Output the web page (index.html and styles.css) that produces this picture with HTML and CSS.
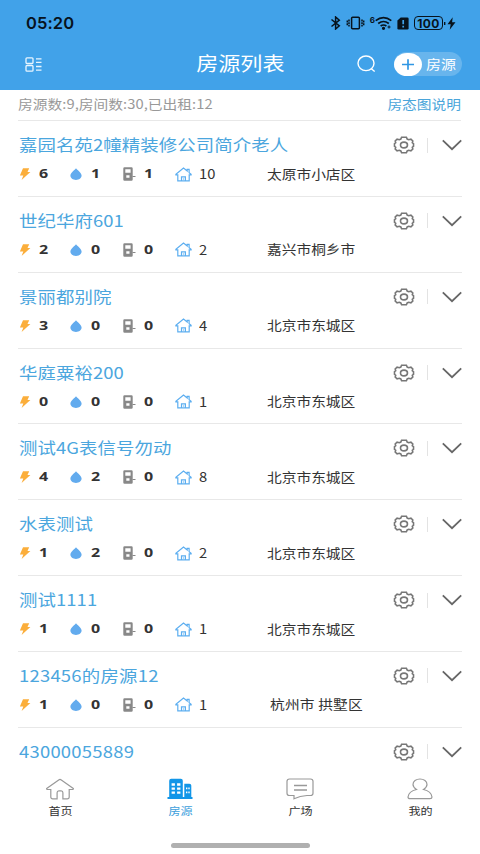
FILE: index.html
```html
<!DOCTYPE html>
<html lang="zh-CN">
<head>
<meta charset="utf-8">
<title>房源列表</title>
<link rel="stylesheet" href="styles.css">
</head>
<body>
<svg class="defs" aria-hidden="true">
  <symbol id="bolt" viewBox="0 0 12 12"><path d="M4 .3h6.200L8.500 3.900h2.900L2.600 11.900l1.700-4.300H.9z"/></symbol>
  <symbol id="drop" viewBox="0 0 12 12"><path d="M6 .2C7.200 2 11.600 4.700 11.600 7.500 11.600 10.200 9 11.900 6 11.900S.4 10.200.4 7.500C.4 4.700 4.800 2 6 .2z"/></symbol>
  <symbol id="meter" viewBox="0 0 13 14"><path fill-rule="evenodd" d="M1.500.2h7q1.200 0 1.200 1.200v11.200q0 1.200-1.200 1.200h-7Q.3 13.800.3 12.600V1.400Q.3.2 1.500.2zM2.300 2.200v3.500h5.300V2.200zM3.300 8.300v2.400h3.200V8.300z"/><path d="M9.500 9h3v1h-3z"/></symbol>
  <symbol id="house" viewBox="0 0 17 15"><path d="M2.800 7.900H.9v-.6L8.500 1l3.700 3V2.300h1.900v3.400l2 1.600v.6h-1.900v6H2.800zM6.500 13.700V9.800h3.900v3.900M8.500 11.400v1"/></symbol>
  <symbol id="gear" viewBox="0 0 22 18"><path d="M8.600 1.200h4.800l.8 1.900 1.400.6 2.300-.5 1.900 1.800-.5 1.800 1.200.9v2.600l-1.200.9.5 1.800-1.900 1.800-2.300-.5-1.400.6-.8 1.900H8.600l-.8-1.900-1.400-.6-2.300.5L2.200 13l.5-1.800-1.200-.9V7.700l1.200-.9L2.200 5l1.900-1.800 2.300.5 1.400-.6z"/><ellipse cx="11" cy="9" rx="3.500" ry="2.900"/></symbol>
  <symbol id="chevron" viewBox="0 0 20 12"><path d="M.8 1.300 10 10.200l9.200-8.900"/></symbol>
</svg>
<header class="header">
  <div class="status">
    <span class="clock">05:20</span>
    <div class="indicators">
      <svg width="10" height="14" viewBox="1 0 10 14" fill="none" stroke="#07131d" stroke-width="1.500"><path d="M1.500 3.500l7.800 6.300L5.600 13V1l3.700 3.200-7.800 6.300"/></svg>
      <svg width="19" height="14" viewBox="0 0 19 14" fill="none" stroke="#07131d" stroke-width="1.500"><rect x="5.600" y="1.200" width="7.800" height="11.600" rx="1"/><path d="M3 3.500v7M16 3.500v7M1.300 4.500v5M17.700 4.500v5" stroke-dasharray="2 .8"/></svg>
      <span class="wifi"><i>6</i><svg width="17" height="14" viewBox="0 0 17 14" fill="none" stroke="#07131d" stroke-width="1.700"><path d="M.7 4.700q7.800-6 15.600 0M3.200 7.500q5.300-4 10.600 0M5.600 10q2.900-2 5.800 0"/><circle cx="8.500" cy="12.300" r=".8" fill="#07131d"/><path d="M14 9.500v3M12.500 11h3" stroke-width="1"/></svg></span>
      <svg width="12" height="13" viewBox="0 0 12 13"><path fill="#07131d" d="M3.700.4h6.600q1.300 0 1.300 1.300v9.600q0 1.300-1.300 1.300H1.700Q.4 12.600.4 11.300V3.600z"/><path stroke="#41a2e9" stroke-width="1.700" d="M6.200 3v4.300M6.200 8.700v1.700"/></svg>
      <span class="battery">100</span>
      <svg class="charge" width="12" height="13" viewBox="-3 0 12 13"><path fill="#07131d" d="M-3 5h1.400v3H-3zM5.700.3.500 7.300h3.200L2.700 12.700 8.500 5.300H5.100z"/></svg>
    </div>
  </div>
  <div class="nav">
    <svg class="menu" width="17" height="15" viewBox="0 0 17 15" fill="none" stroke="#e8f5ff" stroke-width="1.300"><rect x="1" y=".8" width="7" height="5.700" rx="1"/><rect x="1" y="8.500" width="7" height="5.700" rx="1"/><path d="M11 1.800h5.500M11 5.300h5.500M11 9.500h5.500M11 13.200h5.500"/></svg>
    <h1 class="heading"><span class="wide center">房源列表</span></h1>
    <svg class="search" width="19" height="18" viewBox="0 0 19 18" fill="none" stroke="#fff" stroke-width="1.400"><ellipse cx="9" cy="8.300" rx="8" ry="7.300"/><path d="M14 13.500l3.700 3"/></svg>
    <div class="add">
      <svg width="28" height="23" viewBox="0 0 28 23"><rect width="28" height="23" rx="13" ry="11.500" fill="#fff"/><path d="M14 6.200v10.600M8 11.500h12" stroke="#3097e4" stroke-width="1.700"/></svg>
      <span class="wide">房源</span>
    </div>
  </div>
</header>
<div class="summary"><span class="wide">房源数:9,房间数:30,已出租:12</span><a class="wide right">房态图说明</a></div>
<main class="list" id="list"></main>
<nav class="tabs">
  <div class="tab"><svg width="30" height="22" viewBox="0 0 30 22"><path d="M5.800 11.500H2.200Q1 11 2 10.300L13.700 1.900q1.300-.9 2.600 0L28 10.300q1 .7-.2 1.200h-3.600V19q0 1.800-2 1.800h-4.300v-6q0-1.900-1.700-1.900h-2.400q-1.700 0-1.700 1.900v6H7.800q-2 0-2-1.800z"/></svg><span class="wide center">首页</span></div>
  <div class="tab active"><svg width="26" height="22" viewBox="0 0 26 22"><path fill-rule="evenodd" d="M.5 19h1.700V2.700Q2.200.8 4.200.8h9.600q2 0 2 1.900V19h1.500V5.700h5q2 0 2 1.800V19h1.200v2H.5zM4.600 5.300v2.500h3.300V5.300zm5.500 0v2.500h3.300V5.300zM4.600 9.400v2.300h3.300V9.400zm5.500 0v2.300h3.300V9.400zM4.600 13.400v2.300h3.300v-2.300zm5.500 0v2.300h3.300v-2.300zM19 9.400v1.900h1.400V9.400zm2.300 0v1.900h1.400V9.400zM19 13.400v1.900h1.400v-1.900zm2.300 0v1.900h1.400v-1.900z"/></svg><span class="wide center">房源</span></div>
  <div class="tab"><svg width="28" height="22" viewBox="0 0 28 22"><path d="M3.500 1h21q2.500 0 2.500 2.300v12q0 2.200-2.500 2.200H21q-7 .4-13 3.200v-3.200H3.500Q1 17.500 1 15.300v-12Q1 1 3.500 1z"/><path class="lines" d="M8 7.500h13M8 12h13"/></svg><span class="wide center">广场</span></div>
  <div class="tab"><svg width="26" height="22" viewBox="0 0 26 22"><path d="M9.500 11.500C7 9.800 6 8.300 6 6.500 6 3.300 9.100 1 13 1s7 2.300 7 5.500c0 1.800-1 3.300-3.500 5 4.500 1 8 3.700 8.500 7.500q0 1.700-2 1.700H3q-2 0-2-1.700c.5-3.800 4-6.500 8.500-7.500z"/></svg><span class="wide center">我的</span></div>
</nav>
<div class="handle"></div>
<script src="app.js"></script>
</body>
</html>
```
FILE: styles.css
```css
* { box-sizing: border-box; }
body {
  margin: 0;
  width: 480px;
  height: 854px;
  overflow: hidden;
  display: flex;
  flex-direction: column;
  background: #fff;
  color: #333;
  font-family: "Noto Sans CJK SC", sans-serif;
}
svg { display: block; flex: none; }
.defs { position: absolute; width: 0; height: 0; }
.wide {
  display: inline-block;
  white-space: nowrap;
  transform: scaleX(1.15);
  transform-origin: left center;
}
.center { transform-origin: center; }
.right { transform-origin: right center; }

.header { flex: none; height: 90px; background: #41a2e9; }
.status {
  height: 46px;
  padding: 0 24px 0 26px;
  display: flex;
  align-items: center;
  justify-content: space-between;
  color: #07131d;
}
.clock { font: 600 16.500px/20px Inter, sans-serif; letter-spacing: .1px; }
.indicators { display: flex; align-items: center; gap: 5px; }
.wifi { display: flex; }
.wifi i { font: bold 8px/8px Inter, sans-serif; }
.battery {
  width: 29px;
  height: 14px;
  border: 1px solid #07131d;
  border-radius: 4px;
  text-align: center;
  font: bold 12px/13px Inter, sans-serif;
  letter-spacing: .3px;
}
.charge { margin-left: -4px; }
.nav {
  height: 36px;
  padding: 0 18px 0 25px;
  display: grid;
  grid-template-columns: 17px 1fr 19px 68px;
  align-items: center;
}
.heading {
  margin: -2px 0 0 63px;
  text-align: center;
  font-size: 19.200px;
  font-weight: 400;
  line-height: 28px;
  color: #fff;
}
.add {
  margin-left: auto;
  width: 68px;
  height: 24px;
  border-radius: 12px;
  background: #68b5ed;
  display: flex;
  align-items: center;
  gap: 4px;
  color: #fff;
  font-size: 13px;
  line-height: 20px;
}
.nav .search { margin-left: -18px; }

.summary {
  flex: none;
  height: 31px;
  margin: 0 19px 0 18px;
  padding-bottom: 3px;
  border-bottom: 1px solid #e8e8e8;
  display: flex;
  align-items: center;
  justify-content: space-between;
  font-size: 12.800px;
  color: #999;
}
.summary span { letter-spacing: .04px; }
.summary a { color: #4aa5da; }

.list { flex: none; height: 647px; overflow: hidden; padding: 0 18px; }
.row { height: 75.850px; border-bottom: 1px solid #e8e8e8; padding-top: 10px; }
.top { height: 28px; display: flex; align-items: center; }
.name { font-size: 16px; line-height: 28px; color: #4ba6de; margin: -2px 0 0 .5px; letter-spacing: .08px; }
.name.numeric { letter-spacing: .22px; }
.gear { width: 22px; height: 18px; margin-left: auto; fill: none; stroke: #777; stroke-width: 1.600; }
.divider { width: 1px; height: 15px; margin: 0 14px 0 12px; background: #e3e3e3; }
.chevron { width: 20px; height: 12px; fill: none; stroke: #666; stroke-width: 1.800; }
.stats {
  height: 30px;
  display: grid;
  grid-template-columns: 51px 52px 53px 92px 1fr;
  align-items: center;
  margin-left: 1px;
  font-size: 12.800px;
}
.stat { display: flex; align-items: center; line-height: 20px; }
.stat b { font: 700 12.500px/20px "Open Sans", sans-serif; transform: scaleX(1.280); }
.bolt { width: 12px; height: 12px; fill: #fbae3b; margin-right: 8px; }
.drop { width: 12px; height: 12px; fill: #62abee; margin-right: 8.500px; }
.meter { width: 13px; height: 14px; fill: #888; margin: 0 7.500px 0 1px; }
.house { width: 17px; height: 15px; fill: none; stroke: #5caef0; stroke-width: 1.200; margin-right: 6.500px; }
.place { margin-top: -2px; }
.place.shifted { margin-left: 3px; letter-spacing: .15px; }

.tabs { flex: none; height: 56px; display: grid; grid-template-columns: repeat(4, 1fr); }
.tab {
  display: flex;
  flex-direction: column;
  align-items: center;
  padding-top: 10px;
  font-size: 10.500px;
  line-height: 20px;
  gap: 1px;
}
.tab svg { fill: none; stroke: #999; stroke-width: 1.200; }
.tab .lines { stroke-width: 1.600; }
.tab.active { color: #3da0dc; }
.tab.active svg { fill: #1296e8; stroke: none; }
.handle { width: 139px; height: 5px; margin: 19px auto 0; border-radius: 3px; background: #b0b0b0; }
```
FILE: app.js
```js
const houses = [
  ["嘉园名苑2幢精装修公司简介老人", 6, 1, 1, 10, "太原市小店区"],
  ["世纪华府601", 2, 0, 0, 2, "嘉兴市桐乡市"],
  ["景丽都别院", 3, 0, 0, 4, "北京市东城区"],
  ["华庭粟裕200", 0, 0, 0, 1, "北京市东城区"],
  ["测试4G表信号勿动", 4, 2, 0, 8, "北京市东城区"],
  ["水表测试", 1, 2, 0, 2, "北京市东城区"],
  ["测试1111", 1, 0, 0, 1, "北京市东城区"],
  ["123456的房源12", 1, 0, 0, 1, "杭州市 拱墅区"],
  ["43000055889"]
];
const icon = (id) => `<svg class="${id}"><use href="#${id}"/></svg>`;
const stat = (id, value, tag) => `<div class="stat">${icon(id)}<${tag} class="wide">${value}</${tag}></div>`;
document.getElementById("list").innerHTML = houses.map(([name, power, water, meter, rooms, place]) => `
  <section class="row">
    <div class="top"><span class="wide name${/^\d/.test(name) ? " numeric" : ""}">${name}</span>${icon("gear")}<i class="divider"></i>${icon("chevron")}</div>
    ${place ? `<div class="stats">${stat("bolt", power, "b")}${stat("drop", water, "b")}${stat("meter", meter, "b")}${stat("house", rooms, "span")}<div class="place${place.includes(" ") ? " shifted" : ""}"><span class="wide">${place}</span></div></div>` : ""}
  </section>`).join("");
```
